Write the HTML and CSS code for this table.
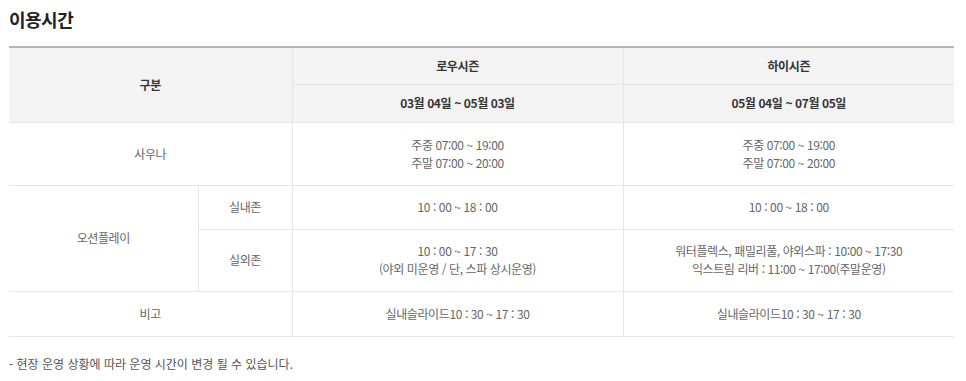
FILE: index.html
```html
<!DOCTYPE html>
<html lang="ko">
<head>
<meta charset="utf-8">
<link rel="stylesheet" href="styles.css">
</head>
<body>
<div class="page">
  <h2 class="title">이용시간</h2>
  <table class="hours">
    <colgroup>
      <col class="c1"><col class="c2"><col class="c3"><col class="c4">
    </colgroup>
    <thead>
      <tr class="h1">
        <th colspan="2" rowspan="2">구분</th>
        <th>로우시즌</th>
        <th>하이시즌</th>
      </tr>
      <tr class="h2">
        <th>03월 04일 ~ 05월 03일</th>
        <th>05월 04일 ~ 07월 05일</th>
      </tr>
    </thead>
    <tbody>
      <tr class="r-sauna">
        <td colspan="2">사우나</td>
        <td>주중 07:00 ~ 19:00<br>주말 07:00 ~ 20:00</td>
        <td>주중 07:00 ~ 19:00<br>주말 07:00 ~ 20:00</td>
      </tr>
      <tr class="r-in">
        <td rowspan="2">오션플레이</td>
        <td>실내존</td>
        <td>10 : 00 ~ 18 : 00</td>
        <td>10 : 00 ~ 18 : 00</td>
      </tr>
      <tr class="r-out">
        <td>실외존</td>
        <td>10 : 00 ~ 17 : 30<br>(야외 미운영 / 단, 스파 상시운영)</td>
        <td>워터플렉스, 패밀리풀, 야외스파 : 10:00 ~ 17:30<br>익스트림 리버 : 11:00 ~ 17:00(주말운영)</td>
      </tr>
      <tr class="r-note">
        <td colspan="2">비고</td>
        <td>실내슬라이드10 : 30 ~ 17 : 30</td>
        <td>실내슬라이드10 : 30 ~ 17 : 30</td>
      </tr>
    </tbody>
  </table>
  <p class="note">- 현장 운영 상황에 따라 운영 시간이 변경 될 수 있습니다.</p>
</div>
</body>
</html>
```
FILE: styles.css
```css
html, body {
  margin: 0;
  padding: 0;
  background: #fff;
}
body {
  font-family: "Noto Sans CJK KR", "Noto Sans", sans-serif;
  color: #666;
}
.page {
  padding: 0 12px 0 9px;
}
.title {
  margin: 0;
  padding-top: 6px;
  height: 46px;
  box-sizing: border-box;
  font-size: 18px;
  line-height: 26px;
  font-weight: 700;
  color: #222;
  letter-spacing: -0.5px;
}
.hours {
  width: 945px;
  border-collapse: collapse;
  table-layout: fixed;
  border-top: 2px solid #b5b5b5;
  font-size: 12px;
  letter-spacing: -0.4px;
}
.c1 { width: 189px; }
.c2 { width: 94px; }
.c3 { width: 331px; }
.c4 { width: 331px; }
.hours th,
.hours td {
  padding: 0;
  text-align: center;
  vertical-align: middle;
  border: 1px solid #e6e6e6;
  line-height: 18px;
}
.hours tr > :first-child { border-left: 0; }
.hours tr > :last-child { border-right: 0; }
.hours .r-out > :first-child { border-left: 1px solid #e6e6e6; }
.hours th {
  background: #f3f3f3;
  color: #333;
  font-weight: 700;
}
.hours thead tr:first-child th { border-top: 0; }
.h1 { height: 37px; }
.h2 { height: 38px; }
.r-sauna { height: 63px; }
.r-in { height: 44px; }
.r-out { height: 62px; }
.r-note { height: 45px; }
.note {
  margin: 18px 0 0;
  font-size: 12px;
  line-height: 18px;
  color: #555;
  letter-spacing: 0;
}
```
